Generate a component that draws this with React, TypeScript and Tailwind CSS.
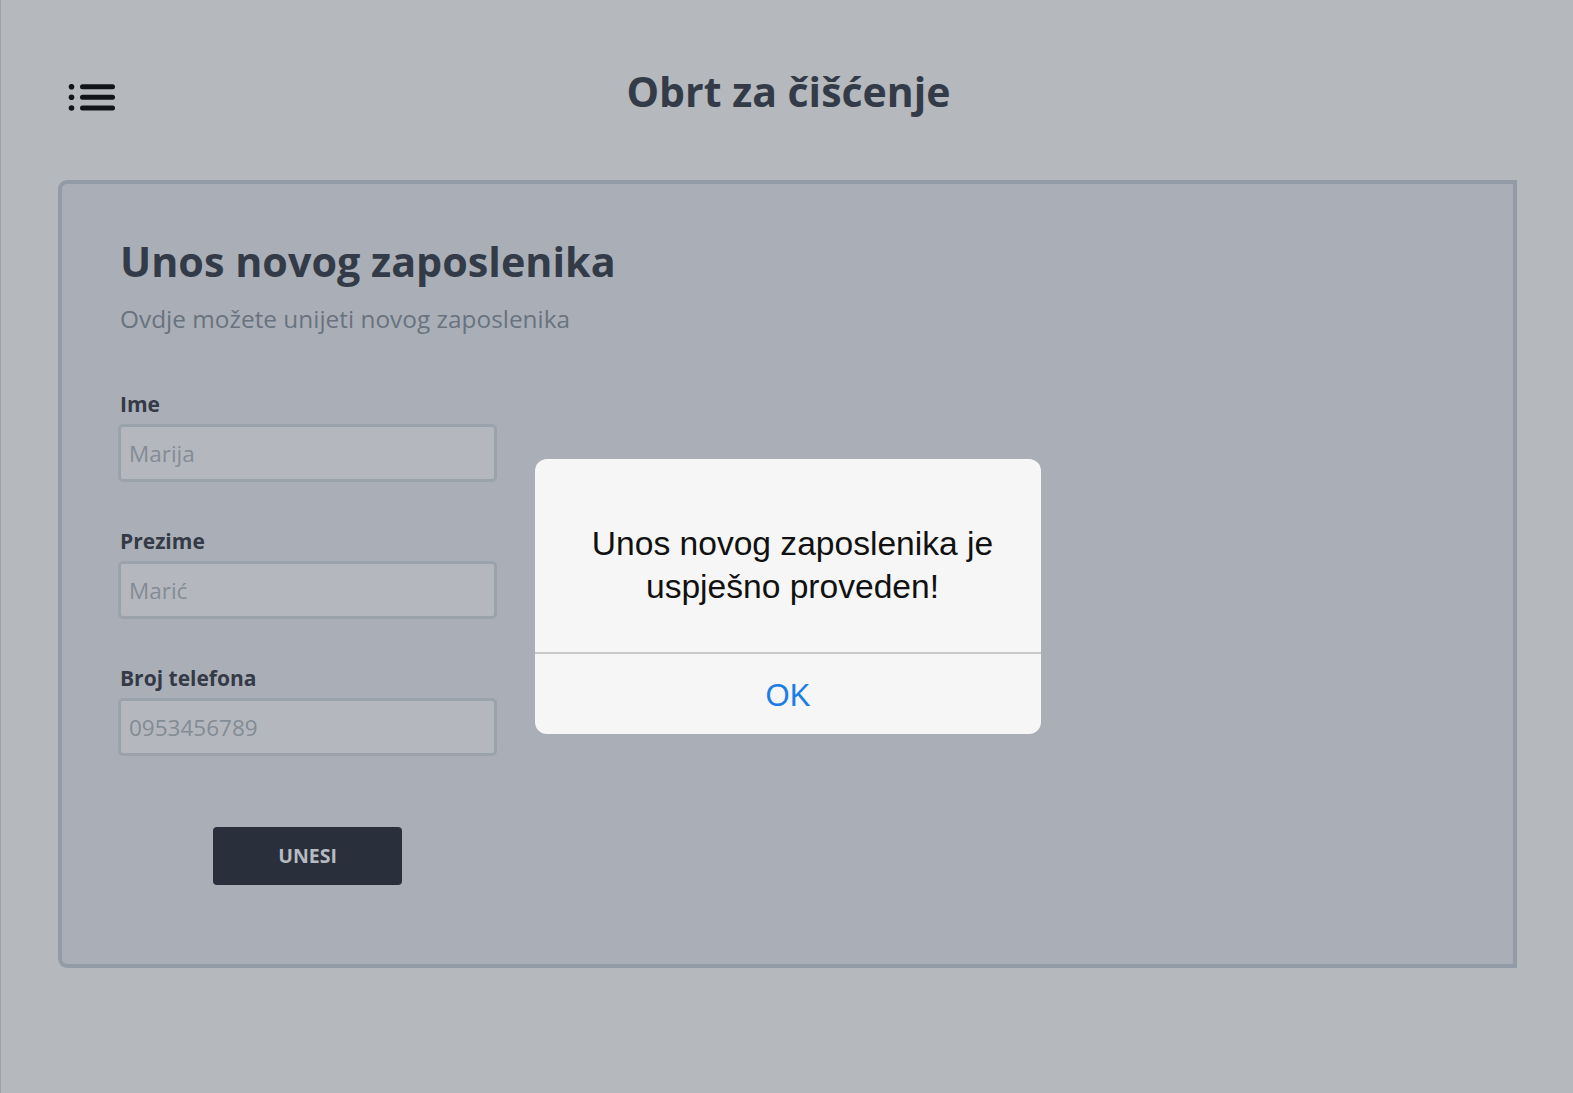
import React from "react";

// Little list icon in the top-left corner
function MenuIcon() {
  return (
    <svg width="48" height="27" viewBox="0 0 48 27" fill="none">
      {[2.7, 13.3, 24].map((y) => (
        <g key={y}>
          <circle cx="3.5" cy={y} r="2.8" fill="#121419" />
          <line x1="14.5" y1={y} x2="44.5" y2={y} stroke="#121419" strokeWidth="5" strokeLinecap="round" />
        </g>
      ))}
    </svg>
  );
}

function Field({ label, placeholder }: { label: string; placeholder: string }) {
  return (
    <div className="flex flex-col">
      <label className="pl-[2px] text-[21px] leading-[30px] font-bold text-[#343a46]">{label}</label>
      <input
        placeholder={placeholder}
        className="mt-[5px] h-[58px] w-full rounded-[5px] border-[3px] border-[#9aa3ac] bg-[#b4b8be] px-[8px] text-[22.5px] text-[#333] placeholder:text-[#838b95] outline-none"
      />
    </div>
  );
}

export default function App() {
  return (
    <div
      className="relative h-[1093px] w-full overflow-hidden border-l border-[#9ca1a8] bg-[#b5b8bd]"
      style={{ fontFamily: '"Open Sans", sans-serif' }}
    >
      {/* Header */}
      <div className="grid h-[180px] grid-cols-[1fr_auto_1fr]">
        <div className="pl-[67px] pt-[84px]">
          <MenuIcon />
        </div>
        <h1 className="pl-[3px] pt-[67px] text-[41px] leading-[48px] font-bold text-[#343b48]">Obrt za čišćenje</h1>
        <div />
      </div>

      {/* Form card */}
      <div className="ml-[57px] mr-[56px] h-[788px] rounded-l-[9px] border-4 border-[#939ca6] bg-[#aaafb7] pl-[56px] pt-[53px]">
        <h2 className="pl-[2px] text-[41.3px] leading-[48px] font-bold text-[#343b48]">Unos novog zaposlenika</h2>
        <p className="mt-[17px] pl-[2px] text-[24.4px] leading-[33px] text-[#69737f]">Ovdje možete unijeti novog zaposlenika</p>

        <div className="mt-[54px] flex w-[379px] flex-col gap-[44px]">
          <Field label="Ime" placeholder="Marija" />
          <Field label="Prezime" placeholder="Marić" />
          <Field label="Broj telefona" placeholder="0953456789" />
        </div>
        <div className="w-[379px] pt-[71px]">
          <button className="mx-auto flex h-[58px] w-[189px] items-center justify-center rounded-[4px] bg-[#29303b] text-[19.5px] font-bold text-[#b6bac1]">
            UNESI
          </button>
        </div>
      </div>

      {/* Alert dialog */}
      <div
        className="absolute left-[534px] top-[459px] flex w-[506px] flex-col overflow-hidden rounded-[12px] bg-[#f6f6f6]"
        style={{ fontFamily: '"Liberation Sans", Arial, sans-serif' }}
      >
        <div className="h-[193px] pl-[29px] pr-[20px] pt-[63px] text-center text-[33.6px] leading-[43px] text-[#111]">
          Unos novog zaposlenika je uspješno proveden!
        </div>
        <div className="h-[2px] bg-[#c9c9c9]" />
        <div className="flex h-[80px] items-center justify-center pt-[5px] text-[31px] text-[#1a7ee6]">OK</div>
      </div>
    </div>
  );
}
